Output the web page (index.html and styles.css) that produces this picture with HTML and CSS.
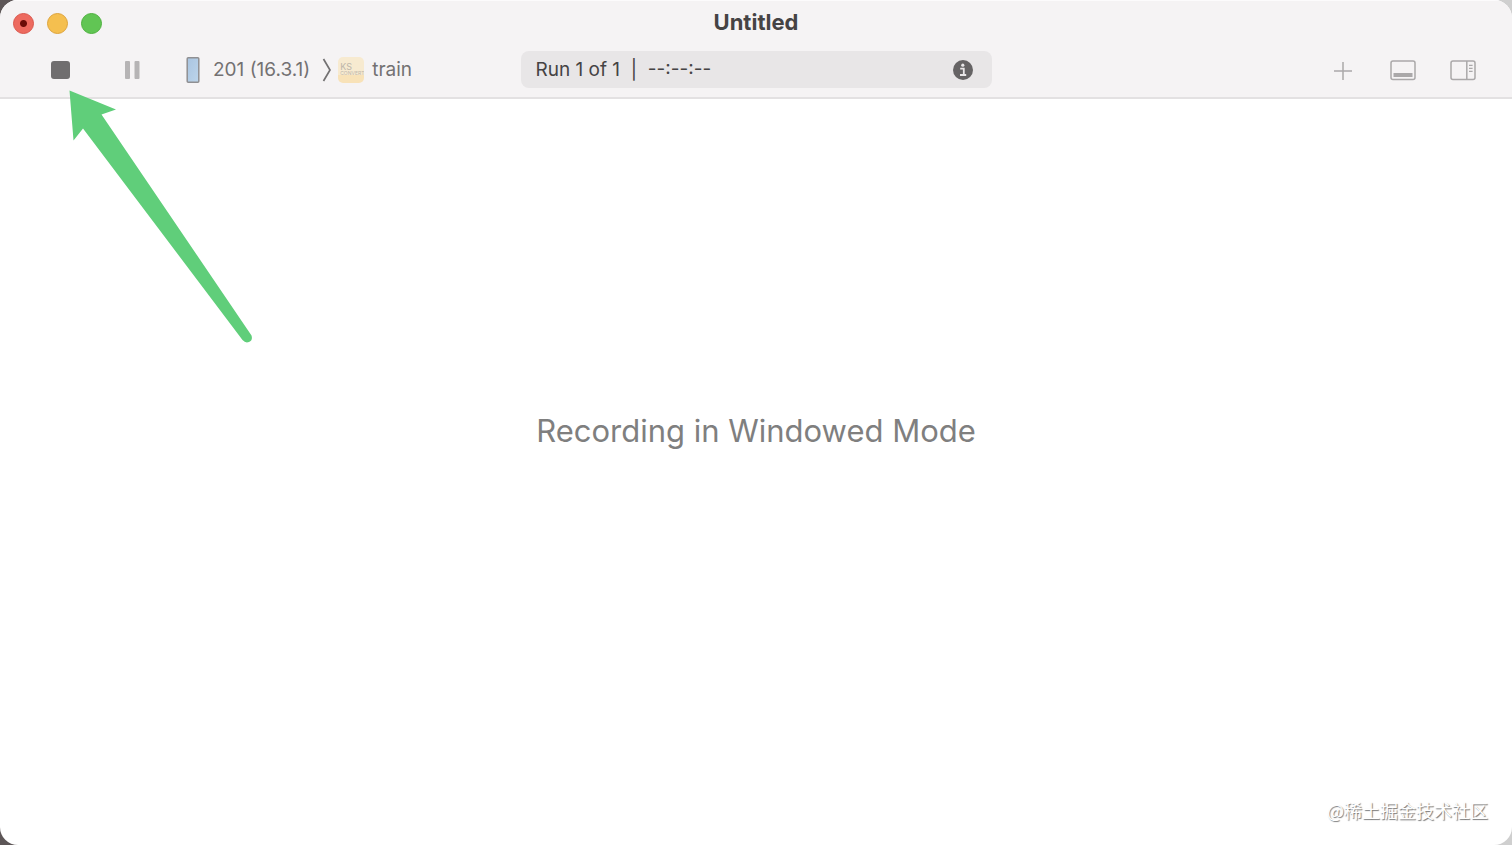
FILE: index.html
```html
<!DOCTYPE html>
<html lang="en">
<head>
    <meta charset="UTF-8">
    <meta name="viewport" content="width=device-width, initial-scale=1.0">
    <title>Untitled</title>
    <link rel="stylesheet" href="styles.css">
</head>
<body>
    <div class="window">
        <header class="header">
            <div class="titlebar">
                <div class="lights">
                    <button class="light close" aria-label="Close"></button>
                    <button class="light minimize" aria-label="Minimize"></button>
                    <button class="light zoom" aria-label="Zoom"></button>
                </div>
                <h1>Untitled</h1>
            </div>

            <div class="toolbar">
                <div class="controls">
                    <button class="icon-button" aria-label="Stop">
                        <svg width="20" height="20" viewBox="0 0 20 20"><rect x="1" y="1" width="19" height="18" rx="3" fill="#706e6f"/></svg>
                    </button>
                    <button class="icon-button" aria-label="Pause">
                        <svg width="20" height="20" viewBox="0 0 20 20"><path d="M3 1h3q1 0 1 1v16q0 1-1 1H3q-1 0-1-1V2q0-1 1-1zM12.500 1h3q1 0 1 1v16q0 1-1 1h-3q-1 0-1-1V2q0-1 1-1z" fill="#b6b4b5"/></svg>
                    </button>
                    <button class="target device">
                        <svg width="14" height="28" viewBox="0 0 14 28">
                            <defs>
                                <linearGradient id="screen" x1="0" y1="0" x2="1" y2="1">
                                    <stop offset="0" stop-color="#a9c4e0"/>
                                    <stop offset="1" stop-color="#bdd5ea"/>
                                </linearGradient>
                            </defs>
                            <rect x="1.2" y="1.7" width="11.6" height="24.6" rx="1" fill="url(#screen)" stroke="#8f8f92" stroke-width="1.5"/>
                        </svg>
                        <span>201 (16.3.1)</span>
                    </button>
                    <svg class="chevron" width="10" height="26" viewBox="0 0 10 26"><path d="M1.5 2l6.500 11-6.500 11" fill="none" stroke="#737172" stroke-width="1.7"/></svg>
                    <button class="target">
                        <span class="app-icon"><span>KS</span><span>CONVERT</span></span>
                        <span>train</span>
                    </button>
                </div>

                <div class="status">
                    <span>Run 1 of 1 &nbsp;|&nbsp; --:--:--</span>
                    <button class="icon-button" aria-label="Info">
                        <svg width="20" height="20" viewBox="0 0 20 20">
                            <circle cx="10" cy="10" r="10" fill="#656364"/>
                            <circle cx="9.8" cy="5.2" r="1.6" fill="#e8e6e7"/>
                            <path d="M7.2 8.7h3.600v6.100M7 15h6.200" fill="none" stroke="#e8e6e7" stroke-width="1.8"/>
                        </svg>
                    </button>
                </div>

                <div class="panels">
                    <button class="icon-button" aria-label="Add">
                        <svg width="26" height="22" viewBox="0 0 26 22"><path d="M4 12h18M13 3v18" fill="none" stroke="#aaa8a9" stroke-width="1.5"/></svg>
                    </button>
                    <button class="icon-button" aria-label="Detail area">
                        <svg width="26" height="22" viewBox="0 0 26 22">
                            <rect x="1" y="2" width="24" height="18.5" rx="2" fill="none" stroke="#aaa8a9" stroke-width="1.5"/>
                            <path d="M3.500 14h19v4h-19z" fill="#aaa8a9"/>
                        </svg>
                    </button>
                    <button class="icon-button" aria-label="Inspector">
                        <svg width="26" height="22" viewBox="0 0 26 22">
                            <rect x="1" y="2" width="24" height="18.5" rx="2" fill="none" stroke="#aaa8a9" stroke-width="1.5"/>
                            <path d="M16.800 2v18.500" stroke="#aaa8a9" stroke-width="1.5"/>
                            <path d="M19 6.300h3.600M19 9.300h3.600M19 12.300h3.600" stroke="#aaa8a9" stroke-width="1.2"/>
                        </svg>
                    </button>
                </div>
            </div>
        </header>

        <main class="content">
            <p>Recording in Windowed Mode</p>
        </main>

        <svg class="arrow" width="190" height="260" viewBox="0 0 190 260">
            <path d="M4.500 5.500L51 24.500L36.500 29.500L186.500 250.500Q188 255.500 184 257Q180.500 258.500 177.500 255L18 43.500L8.500 55.500Z" fill="#60ce7a"/>
        </svg>
        <div class="watermark" lang="zh-CN">@稀土掘金技术社区</div>
    </div>
</body>
</html>
```

FILE: styles.css
```css
* {
    box-sizing: border-box;
}
body {
    margin: 0;
    font-family: Inter, "Noto Sans CJK SC", sans-serif;
    font-size: 19px;
    color: #454344;
    background: linear-gradient(90deg, #5d5657 50%, #cfcfcf 50%);
}
button {
    padding: 0;
    border: none;
    background: none;
    color: inherit;
    font: inherit;
}
svg {
    display: block;
}
.window {
    position: relative;
    display: flex;
    flex-direction: column;
    min-height: 100vh;
    border-radius: 18px;
    overflow: hidden;
    background-color: #fff;
}
.header {
    background-color: #f5f3f4;
    border-top: 1px solid #fcfbfc;
    border-bottom: 2px solid #e3e1e2;
}
.titlebar {
    display: grid;
    grid-template-columns: 1fr auto 1fr;
    align-items: center;
    height: 44px;
    padding: 0 13px;
}
.lights {
    display: flex;
    gap: 13px;
}
.light {
    width: 21px;
    height: 21px;
    border: 1px solid #d9574d;
    border-radius: 50%;
    background-color: #ed6a5f;
}
.close {
    background-image: radial-gradient(circle, #6b0d08 3px, transparent 4px);
}
.minimize {
    border-color: #dda33b;
    background-color: #f5bf4f;
}
.zoom {
    border-color: #4eb13f;
    background-color: #61c554;
}
h1 {
    margin: 0;
    font-size: 22px;
    font-weight: 700;
    line-height: 26px;
    padding-bottom: 2px;
}
.toolbar {
    display: grid;
    grid-template-columns: 1fr minmax(240px, 471px) 1fr;
    align-items: center;
    height: 52px;
    padding-bottom: 3px;
}
.controls {
    display: flex;
    align-items: center;
    padding-left: 50px;
    color: #737172;
}
.controls .icon-button {
    margin-right: 53px;
}
.controls .icon-button + .icon-button {
    margin-right: 43px;
}
.target {
    display: flex;
    align-items: center;
    gap: 8px;
    white-space: nowrap;
}
.device {
    gap: 13px;
}
.chevron {
    margin: 0 6px 0 12px;
}
.app-icon {
    display: flex;
    flex-direction: column;
    justify-content: center;
    width: 26px;
    height: 26px;
    padding-left: 2px;
    border-radius: 5px;
    overflow: hidden;
    background: linear-gradient(#f7ead0 70%, #f8e2b8 70%);
    color: #bdb6aa;
    font-size: 9px;
    line-height: 7px;
    text-align: left;
}
.app-icon span + span {
    font-size: 5px;
}
.status {
    display: flex;
    align-items: center;
    justify-content: space-between;
    height: 37px;
    padding: 0 19px 0 15px;
    border-radius: 8px;
    background-color: #e8e6e7;
}
.panels {
    display: flex;
    justify-content: flex-end;
    gap: 34px;
    padding-right: 36px;
}
.content {
    flex: 1;
    display: flex;
    align-items: center;
    justify-content: center;
    padding-bottom: 82px;
}
.content p {
    margin: 0;
    color: #7f7f7f;
    font-size: 31px;
    line-height: 40px;
}
.arrow {
    position: absolute;
    left: 65px;
    top: 85px;
    pointer-events: none;
}
.watermark {
    position: absolute;
    right: 24px;
    bottom: 22px;
    color: #fff;
    font-family: "Noto Sans CJK SC", sans-serif;
    font-size: 18px;
    line-height: 26px;
    text-shadow: 1px 1px 1px #777;
}
```
